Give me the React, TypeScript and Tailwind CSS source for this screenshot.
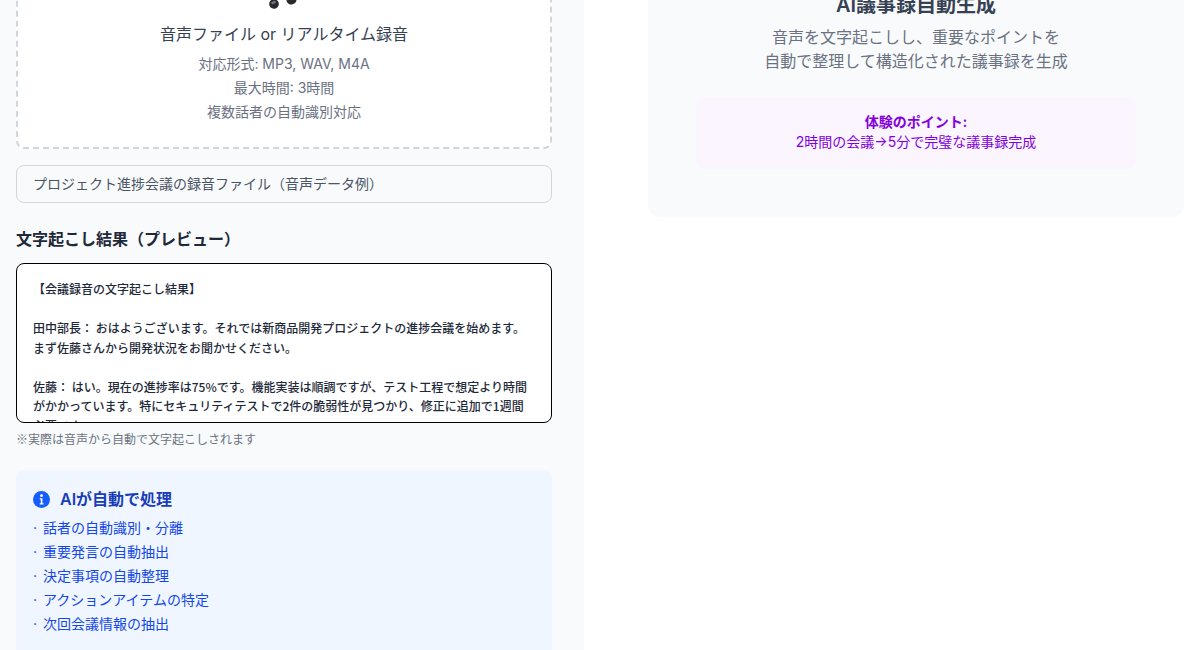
const specs = ['対応形式: MP3, WAV, M4A', '最大時間: 3時間', '複数話者の自動識別対応']

const aiItems = [
  '話者の自動識別・分離',
  '重要発言の自動抽出',
  '決定事項の自動整理',
  'アクションアイテムの特定',
  '次回会議情報の抽出',
]

const transcript = `【会議録音の文字起こし結果】

田中部長： おはようございます。それでは新商品開発プロジェクトの進捗会議を始めます。まず佐藤さんから開発状況をお聞かせください。

佐藤： はい。現在の進捗率は75%です。機能実装は順調ですが、テスト工程で想定より時間がかかっています。特にセキュリティテストで2件の脆弱性が見つかり、修正に追加で1週間必要です。`

// only the bottoms of the note heads are on screen
function MusicNotes() {
  return (
    <svg width="36" height="40" viewBox="0 0 36 40" className="mx-auto block">
      <ellipse cx="8" cy="33" rx="4.8" ry="4.8" transform="rotate(-20 8 33)" fill="#2a2a2e" />
      <ellipse cx="7.500" cy="31.500" rx="2.500" ry="1.400" transform="rotate(-20 7.500 31.500)" fill="#6b7280" />
      <ellipse cx="25.500" cy="29" rx="5" ry="4.500" transform="rotate(-15 25.500 29)" fill="#2a2a2e" />
    </svg>
  )
}

function InfoIcon() {
  return (
    <svg width="17" height="17" viewBox="0 0 16 16" className="flex-shrink-0">
      <circle cx="8" cy="8" r="8" fill="#155dfc" />
      <circle cx="8" cy="4.4" r="1.3" fill="#fff" />
      <path d="M6.4 6.9h2.5v4.6h1v1.1H6.3v-1.1h1V8H6.400z" fill="#fff" />
    </svg>
  )
}

export default function App() {
  return (
    <div className="h-[650px] w-[1200px] overflow-hidden bg-white flex font-['Inter','Noto_Sans_CJK_JP',sans-serif]">
      <div className="w-[584px] h-[650px] flex-shrink-0 bg-gray-50 pl-4 pr-8 overflow-hidden">
        <div className="-mt-[31px] h-[180px] border-2 border-dashed border-gray-300 rounded-lg bg-white text-center">
          <MusicNotes />
          <p className="mt-[11px] text-base leading-6 text-gray-700">音声ファイル or リアルタイム録音</p>
          <div className="mt-[6px] text-sm leading-6 text-gray-500">
            {specs.map(s => (
              <p key={s}>{s}</p>
            ))}
          </div>
        </div>

        <div className="mt-4 h-[38px] border border-gray-300 rounded-lg px-4 pb-px flex items-center text-sm text-gray-600">
          プロジェクト進捗会議の録音ファイル（音声データ例）
        </div>

        <h3 className="mt-6 text-base leading-6 font-semibold text-gray-800">文字起こし結果（プレビュー）</h3>

        <div className="mt-3 h-40 border border-black rounded-lg bg-white pl-4 pr-5 pt-[15px] overflow-hidden">
          <div className="text-xs leading-[19.5px] font-['Noto_Sans_CJK_JP',sans-serif] font-medium text-gray-800 whitespace-pre-wrap">{transcript}</div>
        </div>
        <p className="mt-2 text-xs leading-4 text-gray-500">
          <span className="font-['Noto_Sans_CJK_JP',sans-serif]">※</span>実際は音声から自動で文字起こしされます
        </p>

        <div className="mt-[23px] h-[200px] bg-blue-50 rounded-lg px-[17px] py-4">
          <div className="flex items-center gap-2 h-6">
            <InfoIcon />
            <h4 className="ml-[2px] text-base font-semibold text-blue-800">AIが自動で処理</h4>
          </div>
          <ul className="mt-[5px] text-sm leading-6 text-blue-700">
            {aiItems.map(item => (
              <li key={item} className="flex">
                <span className="w-[10px] flex-shrink-0">·</span>
                <span>{item}</span>
              </li>
            ))}
          </ul>
        </div>
      </div>

      <div className="flex-1 pl-16 pr-4">
        <div className="-mt-[9px] h-[226px] bg-gray-50 rounded-xl text-center">
          <h3 className="text-xl leading-7 font-semibold text-gray-700">AI議事録自動生成</h3>
          <p className="mt-[6px] text-base leading-6 text-gray-500">
            音声を文字起こしし、重要なポイントを
            <br />
            自動で整理して構造化された議事録を生成
          </p>
          <div className="mt-6 mx-12 h-[72px] pb-[2px] bg-purple-50 rounded-lg flex flex-col justify-center text-sm leading-5 text-purple-700">
            <p className="font-semibold">体験のポイント:</p>
            <p>2時間の会議→5分で完璧な議事録完成</p>
          </div>
        </div>
      </div>
    </div>
  )
}
